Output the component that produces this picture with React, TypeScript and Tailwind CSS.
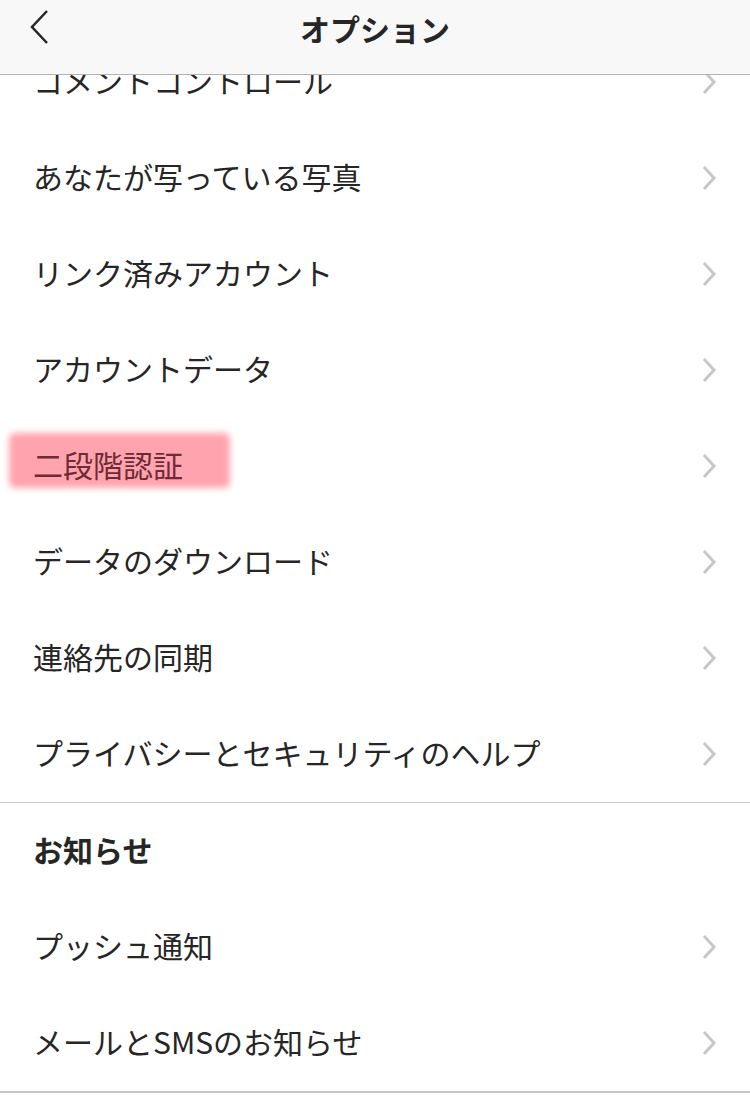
import React from "react";

const FONT = { fontFamily: '"Noto Sans CJK JP", "Noto Sans", sans-serif' };

function Chevron() {
  return (
    <svg width="16" height="26" viewBox="0 0 16 26" className="shrink-0">
      <polyline points="3,2 13,13 3,24" fill="none" stroke="#c7c7c7" strokeWidth="3" strokeLinejoin="miter" />
    </svg>
  );
}

function Row({ label, highlight }: { label: string; highlight?: boolean }) {
  return (
    <div className="relative flex h-[96px] items-center justify-between pl-[33px] pr-[33px]">
      {highlight && (
        <span className="absolute left-[9px] top-[15px] h-[55px] w-[221px] rounded-[6px] bg-[#ff9aa6] opacity-90 blur-[3px]" />
      )}
      <span className={`relative mb-[4px] text-[30px] leading-none ${highlight ? "text-[#6e2b35]" : "text-[#262626]"}`}>
        {label}
      </span>
      <Chevron />
    </div>
  );
}

export default function App() {
  const privacy = [
    "コメントコントロール",
    "あなたが写っている写真",
    "リンク済みアカウント",
    "アカウントデータ",
    "二段階認証",
    "データのダウンロード",
    "連絡先の同期",
    "プライバシーとセキュリティのヘルプ",
  ];
  return (
    <div style={FONT} className="h-[1097px] w-[750px] overflow-hidden bg-white">
      {/* Header */}
      <div className="relative z-10 flex h-[75px] items-center justify-center border-b border-[#b4b4b4] bg-[#f8f8f8]">
        <svg width="22" height="38" viewBox="0 0 22 38" className="absolute left-[28px] top-[9px]">
          <polyline points="19,2 4,18 19,34" fill="none" stroke="#262626" strokeWidth="2.5" />
        </svg>
        <span className="-mt-[18px] text-[30px] font-bold leading-none text-[#262626]">オプション</span>
      </div>

      <div className="-mt-[41px]">
        {privacy.map((p) => (
          <Row key={p} label={p} highlight={p === "二段階認証"} />
        ))}
        <div className="h-px bg-[#c8c8c8]" />
        <div className="flex h-[96px] items-center pl-[33px]">
          <span className="mb-[4px] text-[30px] font-bold leading-none text-[#262626]">お知らせ</span>
        </div>
        <Row label="プッシュ通知" />
        <Row label="メールとSMSのお知らせ" />
        <div className="h-[2px] bg-[#c8c8c8]" />
      </div>
    </div>
  );
}
